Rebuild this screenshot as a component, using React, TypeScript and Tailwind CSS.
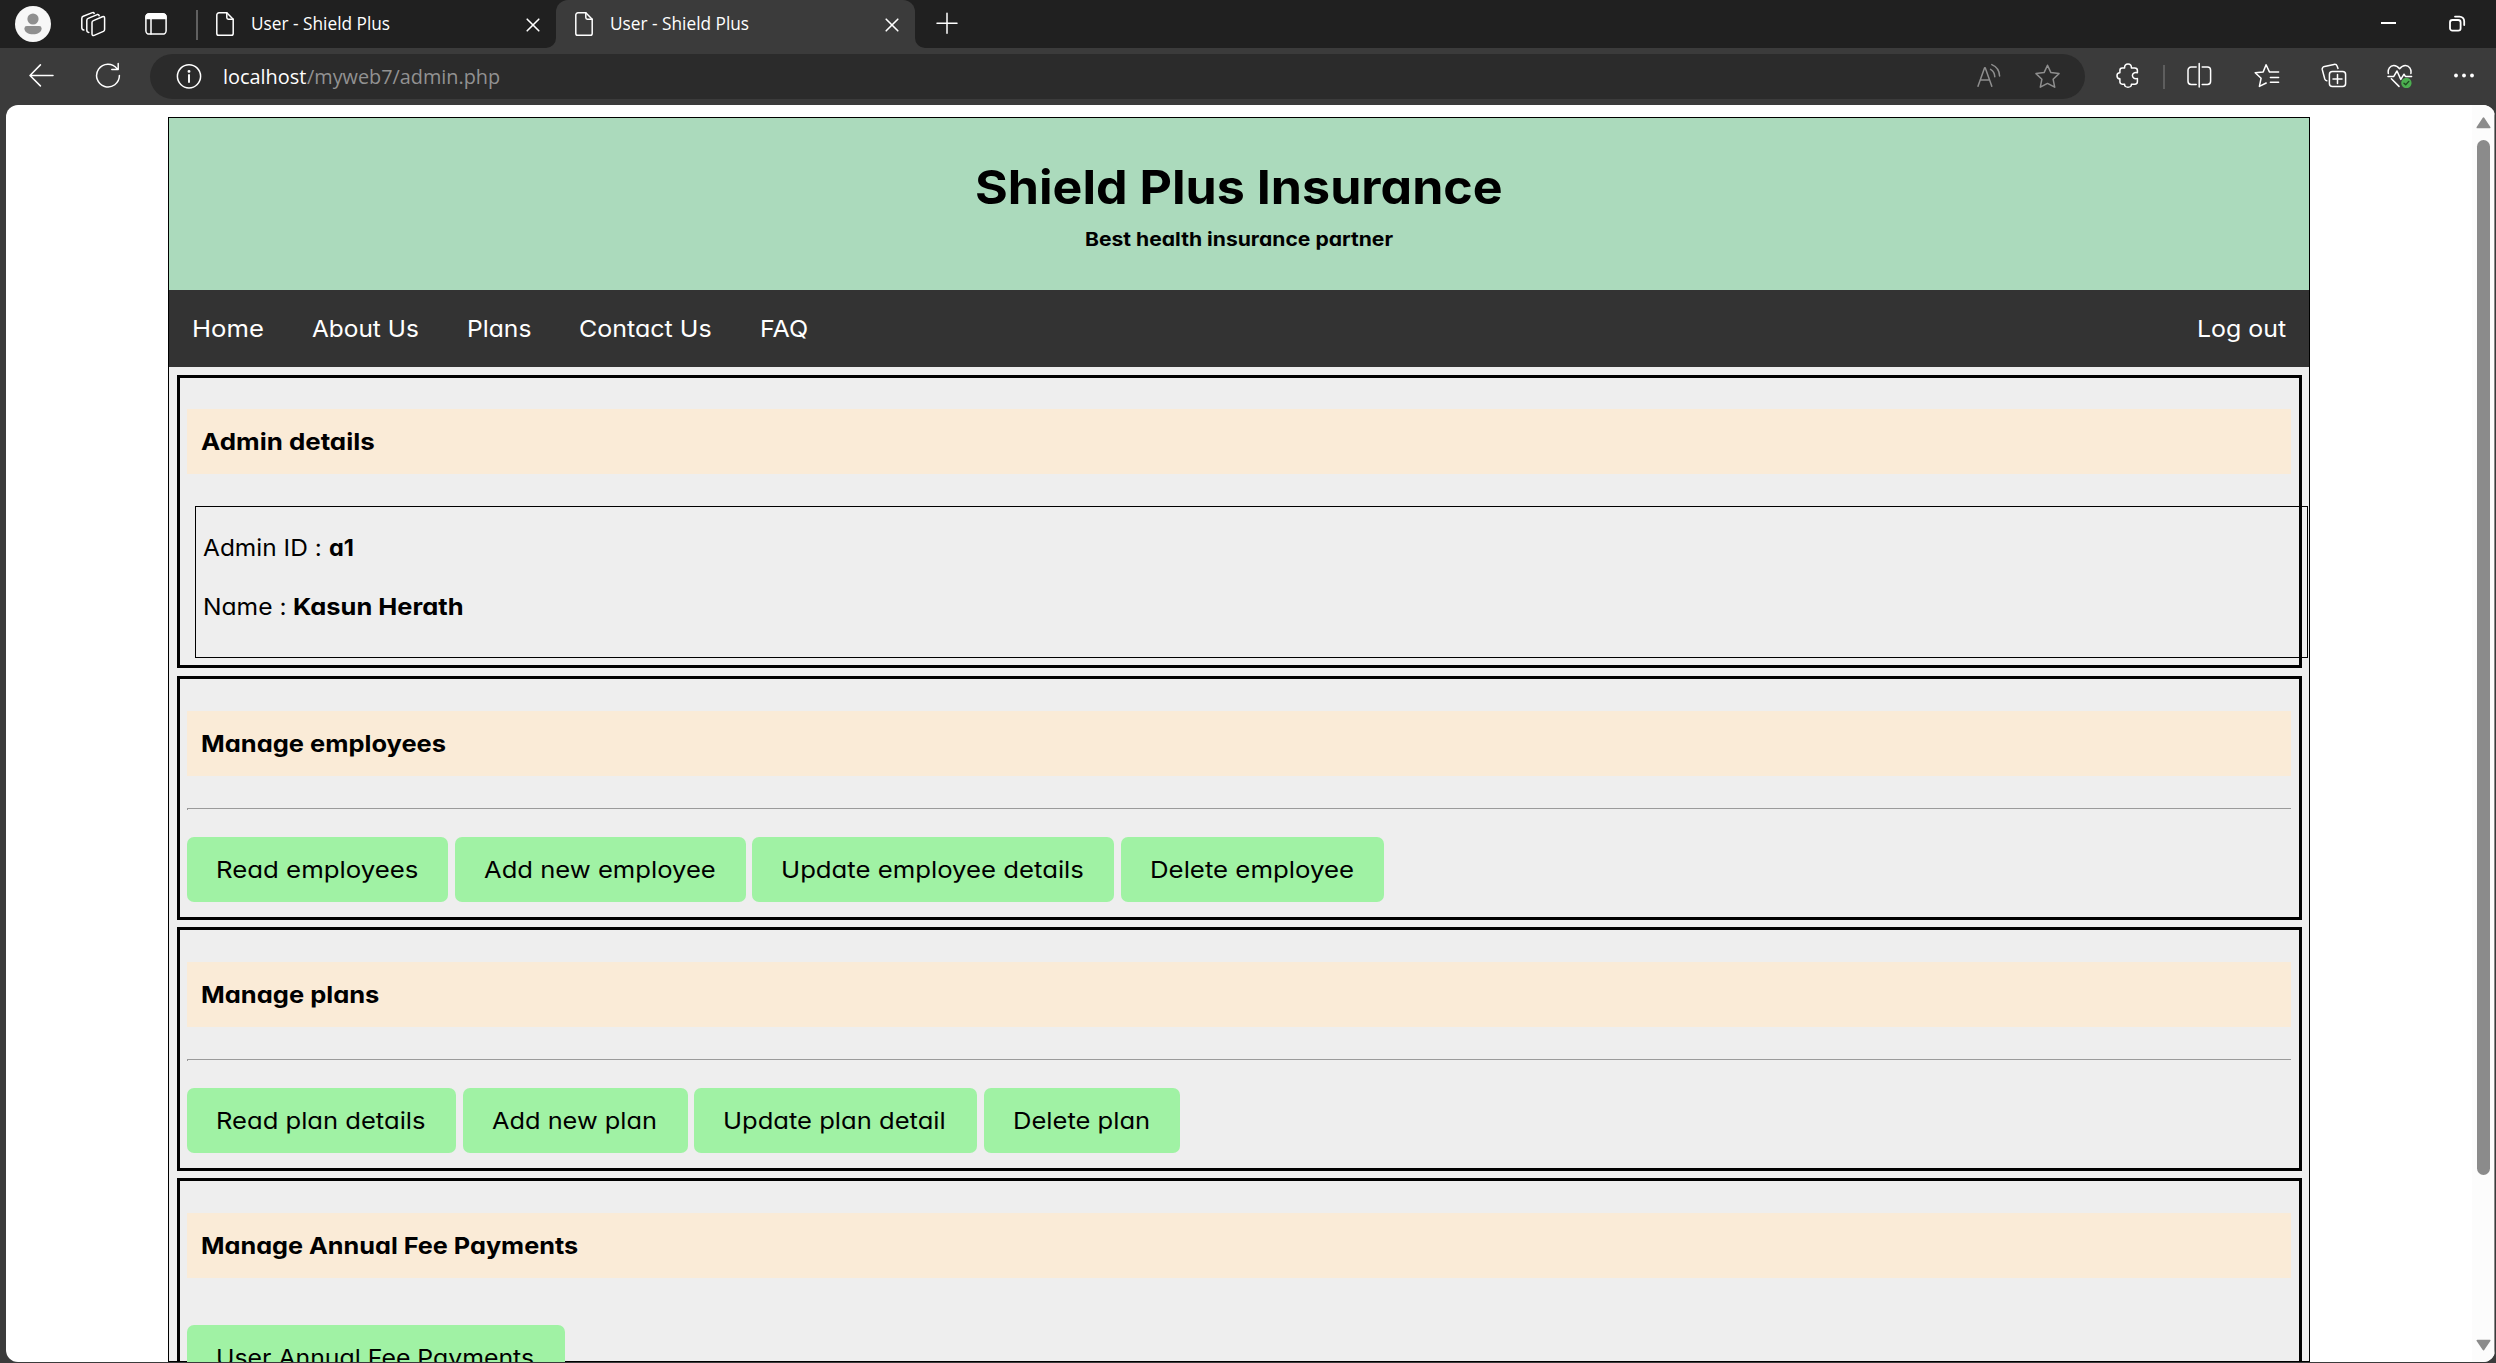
import { useLayoutEffect, useRef, useState } from "react";
import type { ReactNode } from "react";

/* Text run whose glyphs are widened or narrowed so that it fills a given width. */
function Run({ w, className = "", children }: { w: number; className?: string; children: ReactNode }) {
  const ref = useRef<HTMLSpanElement>(null);
  const [scale, setScale] = useState(1);
  useLayoutEffect(() => {
    const el = ref.current;
    if (el) setScale(w / Math.max(1, el.offsetWidth));
  }, [w]);
  return (
    <span className={`inline-block whitespace-pre ${className}`} style={{ width: `${w}px` }}>
      <span ref={ref} className="inline-block origin-left" style={{ transform: `scaleX(${scale})` }}>
        {children}
      </span>
    </span>
  );
}

function Icon({ className = "", children, w = 24, sw = 1.5 }: { className?: string; children: ReactNode; w?: number; sw?: number }) {
  return (
    <svg
      className={`block shrink-0 ${className}`}
      width={w}
      height={26}
      viewBox={`0 0 ${w} 26`}
      fill="none"
      stroke="currentColor"
      strokeWidth={sw}
      strokeLinecap="round"
      strokeLinejoin="round"
    >
      {children}
    </svg>
  );
}

const FileIcon = ({ className = "" }: { className?: string }) => (
  <Icon w={18} className={className}>
    <path d="M3 1.8H10.8L17.2 8.2V22.5A1.8 1.8 0 0 1 15.4 24.3H2.6A1.8 1.8 0 0 1 .8 22.5V4A2.2 2.2 0 0 1 3 1.8Z" />
    <path d="M10.8 1.8V6.6A1.6 1.6 0 0 0 12.4 8.2H17.2" />
  </Icon>
);

const CloseIcon = ({ className = "" }: { className?: string }) => (
  <Icon w={14} className={className} sw={1.6}>
    <path d="M1.2 8.2L12.8 19.8M12.8 8.2L1.2 19.8" />
  </Icon>
);

function TabBar() {
  return (
    <div className="flex h-12 shrink-0 items-start bg-[#202020] text-white">
      <svg className="ml-[15px] mt-[6px] block shrink-0" width="36" height="36" viewBox="0 0 36 36">
        <circle cx="18" cy="18" r="18" fill="#f7f7f7" />
        <circle cx="18" cy="13" r="5.6" fill="#8f8f8f" />
        <path d="M11.8 20H24.2A2.4 2.4 0 0 1 26.6 22.4C26.6 26.2 22.6 28.3 18 28.3S9.4 26.2 9.4 22.4A2.4 2.4 0 0 1 11.8 20Z" fill="#8f8f8f" />
      </svg>
      <Icon className="ml-[30px] mt-[11px]" w={25}>
        <path d="M12.4 9.6L21.4 5.8Q23.6 5 23.6 7.2V18.4Q23.6 19.8 22.4 20.4L13.2 24.4Q11 25.2 11 22.8V11.6Q11 10.2 12.4 9.6Z" />
        <path d="M7.8 21.4Q5.8 21.2 5.8 19V9.4Q5.8 8 7.2 7.4L16.2 3.6Q17.8 3.2 18.2 4.8" />
        <path d="M2.8 19Q.8 18.6.8 16.4V7.4Q.8 5.8 2.2 5.2L11.4 1.6Q12.8 1.2 13.2 2.4" />
      </Icon>
      <Icon className="ml-[39px] mt-[11px]" w={22}>
        <rect x=".9" y="2.9" width="20.2" height="20.2" rx="3.4" />
        <path d="M1 7.4V6A3.4 3.4 0 0 1 4.4 2.8H17.6A3.4 3.4 0 0 1 21 6V7.4Z" fill="currentColor" />
        <path d="M6 8V23" />
      </Icon>
      <div className="ml-[29px] mt-[10px] h-[30px] w-[2px] bg-[#606060]" />
      <div className="flex w-[358px] items-start">
        <FileIcon className="ml-[18px] mt-[11px]" />
        <div className="ml-[17px] mt-[10px] h-[27px] w-[257px] text-[18px] leading-[27px]">
          <Run w={139}>User - Shield Plus</Run>
        </div>
        <CloseIcon className="ml-[18px] mt-[11px]" />
      </div>
      <div className="relative flex h-12 w-[359px] items-start rounded-t-[12px] bg-[#3b3b3b]">
        <svg className="absolute -left-[10px] bottom-0" width="10" height="10" viewBox="0 0 10 10">
          <path d="M10 0V10H0A10 10 0 0 0 10 0Z" fill="#3b3b3b" />
        </svg>
        <svg className="absolute -right-[10px] bottom-0" width="10" height="10" viewBox="0 0 10 10">
          <path d="M0 0V10H10A10 10 0 0 1 0 0Z" fill="#3b3b3b" />
        </svg>
        <FileIcon className="ml-[19px] mt-[11px]" />
        <div className="ml-[17px] mt-[10px] h-[27px] w-[257px] text-[18px] leading-[27px]">
          <Run w={139}>User - Shield Plus</Run>
        </div>
        <CloseIcon className="ml-[18px] mt-[11px]" />
      </div>
      <Icon className="ml-[21px] mt-[10px]" w={22}>
        <path d="M11 3.2V23.2M1 13.2H21" />
      </Icon>
      <div className="ml-auto mr-[30px] flex">
        <div className="mt-[22px] h-[2px] w-[15px] bg-white" />
        <Icon className="ml-[53px] mt-[11px]" w={17} sw={1.8}>
          <rect x="1" y="9" width="10.6" height="10.6" rx="2.4" />
          <path d="M6 5.6H10.6A4.6 4.6 0 0 1 15.2 10.2V14" />
        </Icon>
      </div>
    </div>
  );
}

function Toolbar() {
  return (
    <div className="flex h-[57px] shrink-0 items-start bg-[#3b3b3b] text-white">
      <Icon className="ml-[29px] mt-[15px]" w={25}>
        <path d="M24 12.5H1.4M11.4 1.9L1 12.5L11.4 22.9" />
      </Icon>
      <Icon className="ml-[41px] mt-[14px]" w={26}>
        <path d="M22 6.6A11.4 11.4 0 1 0 24.4 13.5M23.2 1.4V7.6H16.8" />
      </Icon>
      <div className="ml-[29px] mt-[6px] flex h-[45px] w-[1935px] items-start rounded-full bg-[#2b2b2b]">
        <Icon className="ml-[26px] mt-[9px]" w={26}>
          <circle cx="13" cy="13.3" r="11.6" />
          <path d="M13 12V19" strokeWidth="1.9" />
          <circle cx="13" cy="8.4" r=".7" fill="currentColor" />
        </Icon>
        <div className="ml-[21px] mt-[7px] h-[30px] w-[1754px] text-[20.5px] leading-[30px]">
          <Run w={83.5}>localhost</Run>
          <Run w={193.5} className="text-[#929292]">/myweb7/admin.php</Run>
        </div>
        <Icon className="mt-[9px] text-[#8e8e8e]" w={25}>
          <path d="M1 23.2L7.6 4.8H8.2L14.8 23.2M3.2 17H12.6" />
          <path d="M13.6 6.4Q17.6 8.8 17.8 13.8M14.8 1.6Q22.4 4.8 22.6 13" />
        </Icon>
        <Icon className="ml-[33px] mt-[9px] text-[#8e8e8e]" w={25}>
          <path d="M12.5 2.2L15.9 9.6L24 10.6L18.1 16.2L19.7 24.2L12.5 20.4L5.3 24.2L6.9 16.2L1 10.6L9.1 9.6Z" />
        </Icon>
      </div>
      <Icon className="ml-[31px] mt-[15px]" w={23}>
        <path d="M6.2 5H8.6C8.4 2.6 9.8 1 12 1S15.6 2.6 15.4 5H18.8Q21.4 5 21.4 7.4V9.8C18.4 9 16.4 10.4 16.4 12.6S18.4 16.2 21.4 15.4V18.8Q21.4 21.2 18.8 21.2H15.4C15.6 23.4 14 24.2 12 24.2S8.4 23.4 8.6 21.2H6.2Q3.9 21.2 3.9 18.8V15.8C1.8 15.8 1 14.4 1 12.8S1.8 9.8 3.9 9.8V7.4Q3.9 5 6.2 5Z" />
      </Icon>
      <div className="ml-[24px] mt-[17px] h-6 w-[2px] bg-[#5e5e5e]" />
      <Icon className="ml-[22px] mt-[14px]" w={25}>
        <path d="M9.2 5H4.2A3.2 3.2 0 0 0 1 8.2V19.2A3.2 3.2 0 0 0 4.2 22.4H9.2M15.2 5H20.4A3.2 3.2 0 0 1 23.6 8.2V19.2A3.2 3.2 0 0 1 20.4 22.4H15.2M12.2 1.6V25" />
      </Icon>
      <Icon className="ml-[42px] mt-[14px]" w={26}>
        <path d="M15.4 9.9L12.1 2.7L9.2 9.9L1.2 10.7L7.1 16.2L5.4 24.4L12.2 21M15.4 9.9H24.6M16.4 15.6H24.6M16.4 20.2H24.6" />
      </Icon>
      <Icon className="ml-[41px] mt-[14px]" w={26}>
        <rect x="8.4" y="9.6" width="16.2" height="15" rx="3" />
        <path d="M16.5 12.6V21.6M12 17.1H21" />
        <path d="M17 6.4L16.2 4.2Q15.4 2 13 2.4L3.6 4.4Q1 5.2 1.2 7.4L3.8 17Q4.4 18.6 5.8 18.8" />
      </Icon>
      <Icon className="ml-[40px] mt-[14px]" w={26}>
        <path d="M1.3 11.4C.6 7.2 3 3.4 6.8 3.4C9.4 3.4 10.8 4.4 12.6 6.8C14.4 4.4 15.8 3.4 18.4 3.4C22.2 3.4 24.6 7.2 23.9 11.4M4.4 16.8L12 24.4" />
        <path d="M1 14.4H6.8L10 9L13.8 17.4L17 12.2L18.4 14.4H24.6" />
        <circle cx="19.4" cy="21" r="5.2" fill="#4caf50" stroke="none" />
        <path d="M17 21.2L18.7 22.8L21.8 19.4" stroke="#1e4a20" strokeWidth="1.4" />
      </Icon>
      <Icon className="ml-[40px] mt-[14px]" w={22}>
        <g fill="currentColor" stroke="none">
          <circle cx="3" cy="13.5" r="1.9" />
          <circle cx="11" cy="13.5" r="1.9" />
          <circle cx="19" cy="13.5" r="1.9" />
        </g>
      </Icon>
    </div>
  );
}

const NAV = [
  { label: "Home", w: 72 },
  { label: "About Us", w: 107 },
  { label: "Plans", w: 64 },
  { label: "Contact Us", w: 133 },
  { label: "FAQ", w: 48 },
];

type Item = { label: string; box: string; w: number };

const EMPLOYEES: Item[] = [
  { label: "Read employees", box: "w-[261px]", w: 202 },
  { label: "Add new employee", box: "w-[291px]", w: 232 },
  { label: "Update employee details", box: "w-[362px]", w: 303 },
  { label: "Delete employee", box: "w-[263px]", w: 204 },
];

const PLANS: Item[] = [
  { label: "Read plan details", box: "w-[269px]", w: 210 },
  { label: "Add new plan", box: "w-[225px]", w: 165 },
  { label: "Update plan detail", box: "w-[283px]", w: 223 },
  { label: "Delete plan", box: "w-[196px]", w: 137 },
];

const PAYMENTS: Item[] = [{ label: "User Annual Fee Payments", box: "w-[378px]", w: 318 }];

function Buttons({ items }: { items: Item[] }) {
  return (
    <div className="flex gap-[6.5px]">
      {items.map((it) => (
        <button key={it.label} className={`h-[65px] shrink-0 rounded-[7px] bg-[#a0f2a4] pl-[29px] text-left text-[23.5px] leading-[65px] ${it.box}`}>
          <Run w={it.w}>{it.label}</Run>
        </button>
      ))}
    </div>
  );
}

function Heading({ w, children }: { w: number; children: ReactNode }) {
  return (
    <h2 className="mr-[8px] ml-[7px] h-[65px] bg-[#faebd7] pl-[14px] text-[23.5px] leading-[65px] font-bold">
      <Run w={w}>{children}</Run>
    </h2>
  );
}

const Rule = () => <div className="mr-[8px] ml-[7px] h-[2px] border-t border-l border-t-[#9a9a9a] border-l-[#9a9a9a]" />;

const SECTION = "mr-[7px] ml-[8px] shrink-0 border-[3px] border-black";

function Site() {
  return (
    <div className="ml-[162px] mt-3 flex w-[2142px] flex-col border border-black bg-[#eee] font-[Inter,sans-serif] text-black [font-feature-settings:'cv11','calt'_0]">
      <header className="flex h-[172px] shrink-0 flex-col items-center bg-[#abdabc] font-bold">
        <h1 className="mt-[36px] h-[66px] text-[47px] leading-[66px]">
          <Run w={528}>Shield Plus Insurance</Run>
        </h1>
        <p className="mt-[5px] h-[28px] text-[19.2px] leading-[28px]">
          <Run w={308}>Best health insurance partner</Run>
        </p>
      </header>
      <nav className="flex h-[77px] shrink-0 bg-[#333] px-[23px] text-[23.5px] leading-[77px] text-white">
        <div className="flex gap-12">
          {NAV.map((n) => (
            <Run key={n.label} w={n.w}>{n.label}</Run>
          ))}
        </div>
        <Run w={89} className="ml-auto">Log out</Run>
      </nav>

      <section className={`mt-2 h-[293px] pt-[31px] ${SECTION}`}>
        <Heading w={174}>Admin details</Heading>
        <div className="mt-8 ml-[15px] h-[152px] w-[2113px] border border-black pt-[23px] pl-[7px] text-[23.5px] leading-[36px]">
          <p>
            <Run w={126}>Admin ID : </Run>
            <Run w={25} className="font-bold">a1</Run>
          </p>
          <p className="mt-[23px]">
            <Run w={90}>Name : </Run>
            <Run w={170} className="font-bold">Kasun Herath</Run>
          </p>
        </div>
      </section>

      <section className={`mt-2 h-[244px] pt-8 ${SECTION}`}>
        <Heading w={245}>Manage employees</Heading>
        <div className="pt-8 pb-[27px]"><Rule /></div>
        <div className="ml-[7px]"><Buttons items={EMPLOYEES} /></div>
      </section>

      <section className={`mt-[7px] h-[244px] pt-8 ${SECTION}`}>
        <Heading w={178}>Manage plans</Heading>
        <div className="pt-8 pb-[27px]"><Rule /></div>
        <div className="ml-[7px]"><Buttons items={PLANS} /></div>
      </section>

      <section className={`mt-[7px] h-[244px] pt-8 ${SECTION}`}>
        <Heading w={377}>Manage Annual Fee Payments</Heading>
        <div className="mt-[47px] ml-[7px]"><Buttons items={PAYMENTS} /></div>
      </section>
    </div>
  );
}

function Scrollbar() {
  return (
    <div className="flex w-[23px] shrink-0 flex-col items-center border-r border-[#8a8a8a] bg-[#fcfcfc]">
      <svg className="mt-[12px] block shrink-0" width="15" height="12" viewBox="0 0 15 12">
        <path d="M7.5 1.2L13.6 10.4H1.4Z" fill="#8b8b8b" stroke="#8b8b8b" strokeWidth="1.8" strokeLinejoin="round" />
      </svg>
      <div className="mt-[11px] h-[1035px] w-[13px] shrink-0 rounded-full bg-[#8b8b8b]" />
      <svg className="mt-auto mb-[11px] block shrink-0" width="15" height="12" viewBox="0 0 15 12">
        <path d="M7.5 10.6L13.6 1.6H1.4Z" fill="#8b8b8b" stroke="#8b8b8b" strokeWidth="1.8" strokeLinejoin="round" />
      </svg>
    </div>
  );
}

export default function App() {
  return (
    <div className="flex h-[1363px] w-[2496px] flex-col overflow-hidden bg-[#3b3b3b] font-['Open_Sans',sans-serif]">
      <TabBar />
      <Toolbar />
      <main className="mr-px ml-[6px] flex h-[1257px] shrink-0 justify-between overflow-hidden rounded-[12px] bg-white">
        <Site />
        <Scrollbar />
      </main>
    </div>
  );
}
